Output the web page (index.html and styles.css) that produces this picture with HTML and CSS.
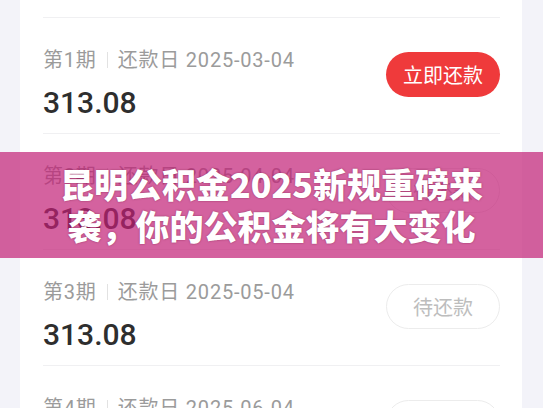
FILE: index.html
```html
<!DOCTYPE html>
<html lang="zh-CN">
<head>
<meta charset="utf-8">
<title>昆明公积金2025新规</title>
<link rel="stylesheet" href="styles.css">
</head>
<body>
<div class="page">
  <div class="card">
    <div class="item">
      <div class="item-inner">
        <div class="info">
          <div class="meta"><span>第0期</span><i class="sep"></i><span>还款日 2025-02-04</span></div>
          <div class="amount amount-prev">313.08</div>
        </div>
        <button class="btn btn-ghost">已还款</button>
      </div>
    </div>
    <div class="item">
      <div class="item-inner">
        <div class="info">
          <div class="meta"><span>第1期</span><i class="sep"></i><span>还款日 2025-03-04</span></div>
          <div class="amount">313.08</div>
        </div>
        <button class="btn btn-primary">立即还款</button>
      </div>
    </div>
    <div class="item">
      <div class="item-inner">
        <div class="info">
          <div class="meta"><span>第2期</span><i class="sep"></i><span>还款日 2025-04-04</span></div>
          <div class="amount">313.08</div>
        </div>
        <button class="btn btn-ghost">待还款</button>
      </div>
    </div>
    <div class="item">
      <div class="item-inner">
        <div class="info">
          <div class="meta"><span>第3期</span><i class="sep"></i><span>还款日 2025-05-04</span></div>
          <div class="amount">313.08</div>
        </div>
        <button class="btn btn-ghost">待还款</button>
      </div>
    </div>
    <div class="item">
      <div class="item-inner">
        <div class="info">
          <div class="meta"><span>第4期</span><i class="sep"></i><span>还款日 2025-06-04</span></div>
          <div class="amount">313.08</div>
        </div>
        <button class="btn btn-ghost">待还款</button>
      </div>
    </div>
  </div>
</div>
<div class="banner">
  <h1 class="banner-title"><span>昆明公积金2025新规重磅来</span><span>袭，你的公积金将有大变化</span></h1>
</div>
</body>
</html>
```

FILE: styles.css
```css
html, body {
  margin: 0;
  padding: 0;
}
body {
  background: #f3f3f9;
  font-family: Roboto, "Noto Sans CJK SC", sans-serif;
  overflow: hidden;
  height: 408px;
}
.page {
  padding: 0 21px 0 20px;
}
.card {
  background: #ffffff;
  margin-top: -103px;
}
.item {
  padding: 0 22px 0 23px;
}
.item-inner {
  display: flex;
  justify-content: space-between;
  align-items: flex-start;
  padding: 28px 0 12px;
  border-top: 1px solid #f0f0f2;
}
.info {
  display: flex;
  flex-direction: column;
  gap: 11px;
}
.meta {
  display: flex;
  align-items: center;
  font-size: 20px;
  line-height: 28px;
  color: #9b9b9b;
  letter-spacing: 0.8px;
}
.sep {
  display: block;
  width: 1px;
  height: 16px;
  background: #e2e2e2;
  margin: 0 10px;
}
.amount {
  font-family: Roboto, sans-serif;
  font-weight: 500;
  font-size: 30px;
  line-height: 36px;
  color: #2e2e2e;
}
.amount-prev {
  line-height: 40px;
}
.btn {
  margin-top: 6px;
  width: 114px;
  height: 45px;
  border-radius: 23px;
  font-family: "Noto Sans CJK SC", sans-serif;
  font-size: 20px;
  line-height: 1;
  padding: 0;
  cursor: pointer;
}
.btn-primary {
  background: #ef3a3b;
  color: #ffffff;
  border: none;
}
.btn-ghost {
  background: #ffffff;
  color: #bdbdbd;
  border: 1px solid #ececec;
}
.banner {
  position: absolute;
  top: 152px;
  left: 0;
  right: 0;
  height: 106px;
  background: rgba(194, 31, 118, 0.7);
  display: flex;
  align-items: center;
  justify-content: center;
}
.banner-title {
  margin: 0;
  display: flex;
  flex-direction: column;
  align-items: center;
  font-family: "Noto Sans CJK SC", sans-serif;
  font-weight: 900;
  font-size: 34px;
  line-height: 42px;
  color: #ffffff;
  text-shadow: 0 0 2px rgba(90, 0, 40, 0.55);
}
```
